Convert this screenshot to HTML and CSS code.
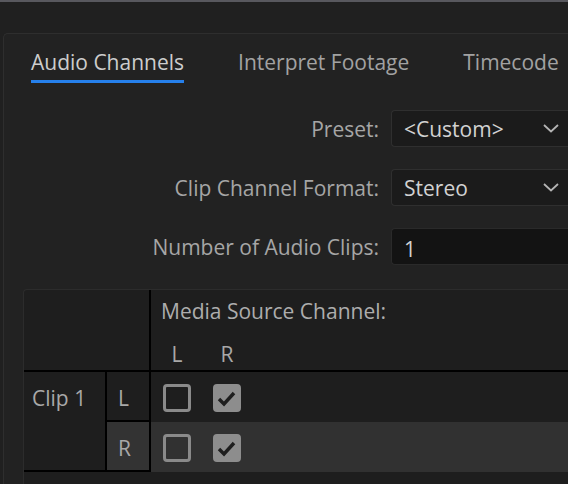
FILE: index.html
```html
<!DOCTYPE html>
<html lang="en">
<head>
<meta charset="utf-8">
<title>Modify Clip</title>
<link rel="stylesheet" href="styles.css">
</head>
<body>
<div class="topbar"></div>
<div class="panel">
  <div class="tabs">
    <div class="tab active">Audio Channels</div>
    <div class="tab">Interpret Footage</div>
    <div class="tab">Timecode</div>
  </div>
  <div class="form">
    <div class="row">
      <div class="label">Preset:</div>
      <div class="control select">
        <span class="value">&lt;Custom&gt;</span>
        <svg class="chev" width="16" height="9" viewBox="0 0 16 9"><polyline points="1,1 8,7.5 15,1" fill="none" stroke="#b4b4b4" stroke-width="1.8"/></svg>
      </div>
    </div>
    <div class="row">
      <div class="label">Clip Channel Format:</div>
      <div class="control select">
        <span class="value">Stereo</span>
        <svg class="chev" width="16" height="9" viewBox="0 0 16 9"><polyline points="1,1 8,7.5 15,1" fill="none" stroke="#b4b4b4" stroke-width="1.8"/></svg>
      </div>
    </div>
    <div class="row">
      <div class="label">Number of Audio Clips:</div>
      <div class="control input"><span class="value">1</span></div>
    </div>
  </div>
  <div class="table">
    <div class="cell head-left"></div>
    <div class="cell head-right">
      <div class="head-title">Media Source Channel:</div>
      <div class="chan-row">
        <span class="chan">L</span>
        <span class="chan">R</span>
      </div>
    </div>
    <div class="cell clip">Clip 1</div>
    <div class="cell ch">L</div>
    <div class="cell boxes">
      <span class="box"></span>
      <span class="box checked"><svg width="22" height="22" viewBox="0 0 22 22"><polyline points="3,12 8,17 18,6" fill="none" stroke="#1e1e1e" stroke-width="3.4"/></svg></span>
    </div>
    <div class="cell ch alt">R</div>
    <div class="cell boxes alt-row">
      <span class="box"></span>
      <span class="box checked"><svg width="22" height="22" viewBox="0 0 22 22"><polyline points="3,12 8,17 18,6" fill="none" stroke="#1e1e1e" stroke-width="3.4"/></svg></span>
    </div>
  </div>
</div>
</body>
</html>
```

FILE: styles.css
```css
html, body {
  margin: 0;
  padding: 0;
}
body {
  width: 568px;
  height: 484px;
  overflow: hidden;
  background: #202020;
  font-family: "Open Sans", "Noto Sans", sans-serif;
  font-size: 21px;
  color: #a8a8a8;
}
.topbar {
  height: 2px;
  background: #58585e;
}
.panel {
  margin: 31px 0 0 3px;
  width: 565px;
  height: 451px;
  overflow: hidden;
  background: #222222;
  border-top: 1px solid #2e2e2e;
  border-left: 1px solid #2e2e2e;
  border-top-left-radius: 5px;
  box-sizing: border-box;
}
.tabs {
  display: flex;
  gap: 54px;
  padding: 14px 0 0 27px;
  white-space: nowrap;
}
.tab {
  line-height: 28px;
  padding: 0 0 4px;
  border-bottom: 3px solid transparent;
  color: #a2a2a2;
}
.tab.active {
  color: #cdcdcd;
  border-bottom-color: #2680eb;
}
.form {
  margin-top: 27px;
  display: flex;
  flex-direction: column;
  gap: 22px;
}
.row {
  display: flex;
  align-items: center;
}
.label {
  flex: 0 0 375px;
  text-align: right;
  margin-right: 12px;
  line-height: 28px;
  color: #a6a6a6;
  white-space: nowrap;
}
.control {
  flex: 0 0 190px;
  height: 37px;
  box-sizing: border-box;
  border: 1px solid #2f2f2f;
  border-right: none;
  border-radius: 4px 0 0 4px;
  display: flex;
  align-items: center;
  justify-content: space-between;
  padding: 0 22px 0 12px;
}
.select {
  background: #1b1b1b;
}
.input {
  background: #131313;
  border-color: #2a2a2a;
}
.value {
  color: #d2d2d2;
  line-height: 28px;
}
.input .value {
  padding-top: 4px;
}
.chev {
  display: block;
}
.table {
  margin: 24px 0 0 19px;
  display: grid;
  grid-template-columns: 83px 44px 1fr;
  grid-template-rows: 82px 50px 50px 40px;
  background: #1e1e1e;
  border-top: 1px solid #2c2c2c;
  border-left: 1px solid #2c2c2c;
  border-top-left-radius: 4px;
}
.cell {
  box-sizing: border-box;
}
.head-left {
  grid-column: 1 / 3;
  border-right: 2px solid #000;
  border-bottom: 2px solid #000;
}
.head-right {
  border-bottom: 2px solid #000;
  padding: 7px 0 0 10px;
  white-space: nowrap;
}
.head-title {
  line-height: 28px;
  color: #adadad;
}
.chan-row {
  display: flex;
  gap: 22px;
  margin-top: 15px;
  padding-left: 2px;
}
.chan {
  width: 28px;
  text-align: center;
  line-height: 28px;
  color: #a8a8a8;
}
.clip {
  grid-column: 1;
  grid-row: 2 / 4;
  border-right: 2px solid #000;
  border-bottom: 2px solid #000;
  padding: 12px 0 0 8px;
  line-height: 28px;
  white-space: nowrap;
}
.ch {
  grid-column: 2;
  border-right: 2px solid #000;
  border-bottom: 2px solid #000;
  padding: 12px 0 0 11px;
  line-height: 28px;
}
.ch.alt {
  background: #333333;
}
.boxes {
  grid-column: 3;
  display: flex;
  gap: 22px;
  padding: 12px 0 0 12px;
}
.alt-row {
  background: #313131;
}
.box {
  width: 28px;
  height: 28px;
  box-sizing: border-box;
  border: 3px solid #8a8a8a;
  border-radius: 4px;
  display: flex;
  align-items: center;
  justify-content: center;
}
.box.checked {
  background: #8d8d8d;
  border-color: #8d8d8d;
}
.box svg {
  display: block;
}
```
